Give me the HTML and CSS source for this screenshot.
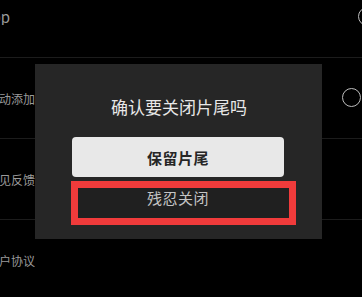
FILE: index.html
```html
<!DOCTYPE html>
<html lang="zh-CN">
<head>
<meta charset="utf-8">
<title>确认要关闭片尾吗</title>
<link rel="stylesheet" href="styles.css">
</head>
<body>
<div class="settings">
  <div class="row">
    <div class="label"><span>关于App</span></div>
    <span class="radio radio-first"></span>
  </div>
  <div class="row">
    <div class="label"><span>自动添加</span></div>
    <span class="radio"></span>
  </div>
  <div class="row">
    <div class="label"><span>意见反馈</span></div>
  </div>
  <div class="row">
    <div class="label"><span>用户协议</span></div>
  </div>
</div>

<div class="dialog">
  <div class="dialog-title">确认要关闭片尾吗</div>
  <div class="btn btn-keep">保留片尾</div>
  <div class="btn-mark">
    <div class="btn btn-close">残忍关闭</div>
  </div>
</div>
</body>
</html>
```

FILE: styles.css
```css
* { box-sizing: border-box; }
html, body {
  margin: 0;
  padding: 0;
  width: 362px;
  height: 297px;
  overflow: hidden;
  background: #000;
  font-family: "Noto Sans CJK SC", "Noto Sans", sans-serif;
}

.settings {
  margin-top: -23px;
  display: flex;
  flex-direction: column;
}

.row {
  height: 81px;
  border-bottom: 1px solid #1c1c1c;
  display: flex;
  align-items: center;
  justify-content: space-between;
}

.label {
  width: 35px;
  overflow: hidden;
  display: flex;
  justify-content: flex-end;
  white-space: nowrap;
  color: #9a9a9a;
  font-size: 12px;
  line-height: 16px;
  padding-top: 2px;
}
.row:first-child .label {
  width: 10px;
  font-size: 15px;
  padding-top: 0;
}

.radio {
  width: 19px;
  height: 19px;
  border: 1.5px solid #bdbdbd;
  border-radius: 50%;
  margin-right: 1px;
  margin-top: -2px;
}
.radio-first {
  margin-right: -15px;
  margin-top: -2px;
}

.dialog {
  position: absolute;
  left: 35px;
  top: 64px;
  width: 287px;
  height: 175px;
  background: #262626;
  padding-top: 31px;
  display: flex;
  flex-direction: column;
  align-items: flex-start;
}

.dialog-title {
  align-self: stretch;
  text-align: center;
  color: #e8e8e8;
  font-size: 17px;
  line-height: 24px;
  padding-left: 1px;
  margin-bottom: 18px;
}

.btn {
  display: flex;
  justify-content: center;
  font-size: 15px;
}

.btn-keep {
  margin-left: 37px;
  width: 212px;
  height: 40px;
  align-items: center;
  background: #e8e8e8;
  border-radius: 4px;
  color: #262626;
  font-weight: 700;
  letter-spacing: 0.5px;
}

.btn-mark {
  margin-top: 4px;
  margin-left: 36px;
  width: 225px;
  height: 44px;
  border: 7px solid #f03b3b;
}

.btn-close {
  height: 100%;
  align-items: flex-start;
  background: #202020;
  color: #c4c4c4;
  line-height: 18px;
  padding-top: 1px;
  padding-right: 11px;
  letter-spacing: 0.5px;
}
```
